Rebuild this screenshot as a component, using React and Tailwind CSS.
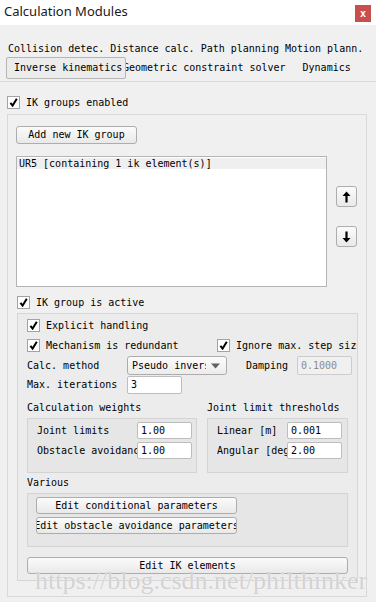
import React from 'react';

const mono = "font-['DejaVu_Sans_Mono',monospace] text-[10px] leading-none text-black";

function CheckBox({ label, className = '' }) {
  return (
    <div className={`flex items-center h-[13px] ${className}`}>
      <div className="w-[13px] h-[13px] shrink-0 bg-white border border-[#a3a3a3] flex items-center justify-center">
        <svg width="9" height="9" viewBox="0 0 9 9">
          <path d="M1.4 4.8 L3.6 7.6 L7.8 0.8" fill="none" stroke="#000" strokeWidth="2" strokeLinejoin="miter" />
        </svg>
      </div>
      <span className="ml-[6px] whitespace-nowrap">{label}</span>
    </div>
  );
}

function Button({ children, className = '' }) {
  return (
    <div className={`flex items-center justify-center whitespace-nowrap overflow-hidden border border-[#adadad] rounded-[3px] bg-gradient-to-b from-[#fbfbfb] to-[#e9e9e9] ${className}`}>
      {children}
    </div>
  );
}

function Field({ value, className = '', disabled }) {
  return (
    <div className={`flex items-center pl-[3px] border rounded-[2px] ${disabled ? 'bg-[#f0f0f0] border-[#cccccc] text-[#8c8c8c]' : 'bg-white border-[#bdbdbd]'} ${className}`}>
      {value}
    </div>
  );
}

function Arrow({ down }) {
  return (
    <svg width="9" height="12" viewBox="0 0 9 12" className={down ? 'rotate-180' : ''}>
      <path d="M4.5 0.5 L8.5 5 L5.6 5 L5.6 11.5 L3.4 11.5 L3.4 5 L0.5 5 Z" fill="#000" />
    </svg>
  );
}

export default function App() {
  return (
    <div className="relative w-[376px] h-[602px] overflow-hidden bg-[#f0f0f0]">
      {/* title bar */}
      <div className="h-[25px] bg-white flex items-start justify-between">
        <span className="ml-[4px] mt-[2px] font-['Noto_Sans',sans-serif] text-[13px] text-[#1a1a1a]">Calculation Modules</span>
        <div className="mt-[5px] mr-[5px] w-[16px] h-[17px] bg-[#c94f4f] flex items-center justify-center text-white text-[10px] font-bold font-['Liberation_Sans',sans-serif]">
          x
        </div>
      </div>

      {/* tabs */}
      <div className={mono}>
        <div className="pt-[12px] pl-[8px] h-[24px] flex items-center whitespace-nowrap">
          <span className="mt-[12px]">Collision detec. Distance calc. Path planning Motion plann.</span>
        </div>
        <div className="mt-[8px] flex items-center h-[22px] whitespace-nowrap">
          <div className="relative z-10 ml-[6px] w-[120px] h-[22px] pl-[7px] flex items-center border border-[#b5b5b5] rounded-[2px] bg-[#ececec]">
            Inverse kinematics
          </div>
          <span className="-ml-[3px]">Geometric constraint solver</span>
          <span className="ml-[17px]">Dynamics</span>
        </div>
        <div className="mt-[2px] h-px bg-[#dadada]" />

        <CheckBox label="IK groups enabled" className="mt-[14px] ml-[7px]" />

        {/* IK groups box */}
        <div className="mt-[5px] ml-[7px] w-[360px] border border-[#d9d9d9] pb-[15px]">
          <Button className="mt-[11px] ml-[8px] w-[121px] h-[18px]">Add new IK group</Button>

          <div className="mt-[12px] flex">
            <div className="ml-[8px] w-[311px] h-[131px] bg-white border border-[#b4b4b4] pt-px">
              <div className="h-[11px] bg-[#efefef] pl-[2px] flex items-center whitespace-nowrap">
                UR5 [containing 1 ik element(s)]
              </div>
            </div>
            <div className="ml-[9px] pt-[30px] flex flex-col gap-[19px]">
              <Button className="w-[21px] h-[21px]"><Arrow /></Button>
              <Button className="w-[21px] h-[21px]"><Arrow down /></Button>
            </div>
          </div>

          <CheckBox label="IK group is active" className="mt-[9px] ml-[9px]" />

          {/* active group box */}
          <div className="mt-[4px] ml-[9px] w-[341px] border border-[#d6d6d6] bg-[#ececec] pl-[9px] pb-[6px] overflow-hidden">
            <CheckBox label="Explicit handling" className="mt-[5px]" />
            <div className="mt-[7px] flex whitespace-nowrap">
              <div className="w-[190px] shrink-0">
                <CheckBox label="Mechanism is redundant" />
              </div>
              <CheckBox label="Ignore max. step size" />
            </div>

            <div className="mt-[4px] flex items-center h-[19px]">
              <span className="w-[100px] shrink-0">Calc. method</span>
              <div className="w-[100px] h-[19px] shrink-0 flex items-center pl-[4px] border border-[#adadad] rounded-[3px] bg-gradient-to-b from-[#fbfbfb] to-[#ececec]">
                <span className="w-[74px] overflow-hidden whitespace-nowrap">Pseudo inverse</span>
                <svg width="9" height="6" viewBox="0 0 9 6" className="ml-[5px]">
                  <path d="M0 0.5 L9 0.5 L4.5 5.5 Z" fill="#606060" />
                </svg>
              </div>
              <span className="ml-[19px] w-[51px] shrink-0">Damping</span>
              <Field value="0.1000" disabled className="w-[55px] h-[19px] shrink-0" />
            </div>

            <div className="mt-[1px] flex items-center h-[18px]">
              <span className="w-[100px] shrink-0">Max. iterations</span>
              <Field value="3" className="w-[55px] h-[18px]" />
            </div>

            <div className="mt-[8px] flex items-center h-[12px] whitespace-nowrap">
              <span className="w-[180px]">Calculation weights</span>
              <span>Joint limit thresholds</span>
            </div>

            <div className="mt-[4px] flex gap-[10px]">
              <div className="w-[170px] border border-[#d4d4d4] bg-[#e6e6e6] pl-[9px] pt-[3px] pb-[13px] flex flex-col gap-[3px]">
                <div className="flex items-center h-[17px]">
                  <span className="w-[100px] overflow-hidden whitespace-nowrap">Joint limits</span>
                  <Field value="1.00" className="w-[55px] h-[17px]" />
                </div>
                <div className="flex items-center h-[17px]">
                  <span className="w-[100px] overflow-hidden whitespace-nowrap">Obstacle avoidance</span>
                  <Field value="1.00" className="w-[55px] h-[17px]" />
                </div>
              </div>
              <div className="w-[141px] border border-[#d4d4d4] bg-[#e6e6e6] pl-[9px] pt-[3px] pb-[13px] flex flex-col gap-[3px]">
                <div className="flex items-center h-[17px]">
                  <span className="w-[70px] overflow-hidden whitespace-nowrap">Linear [m]</span>
                  <Field value="0.001" className="w-[55px] h-[17px]" />
                </div>
                <div className="flex items-center h-[17px]">
                  <span className="w-[70px] overflow-hidden whitespace-nowrap">Angular [deg]</span>
                  <Field value="2.00" className="w-[55px] h-[17px]" />
                </div>
              </div>
            </div>

            <div className="mt-[4px] h-[12px] flex items-center">Various</div>

            <div className="mt-[4px] w-[321px] border border-[#d4d4d4] bg-[#e6e6e6] pl-[8px] pt-[3px] pb-[12px] flex flex-col gap-[3px]">
              <Button className="w-[201px] h-[17px]">Edit conditional parameters</Button>
              <Button className="w-[201px] h-[17px]">Edit obstacle avoidance parameters</Button>
            </div>

            <Button className="mt-[10px] w-[321px] h-[17px]">Edit IK elements</Button>
          </div>
        </div>
      </div>

      {/* watermark */}
      <div className="absolute left-[35px] top-[568px] font-['Liberation_Serif',serif] text-[26px] leading-none text-[#d2d2d2] whitespace-nowrap [text-shadow:0_0_1px_#ffffff] pointer-events-none">
        https://blog.csdn.net/philthinker
      </div>
    </div>
  );
}
